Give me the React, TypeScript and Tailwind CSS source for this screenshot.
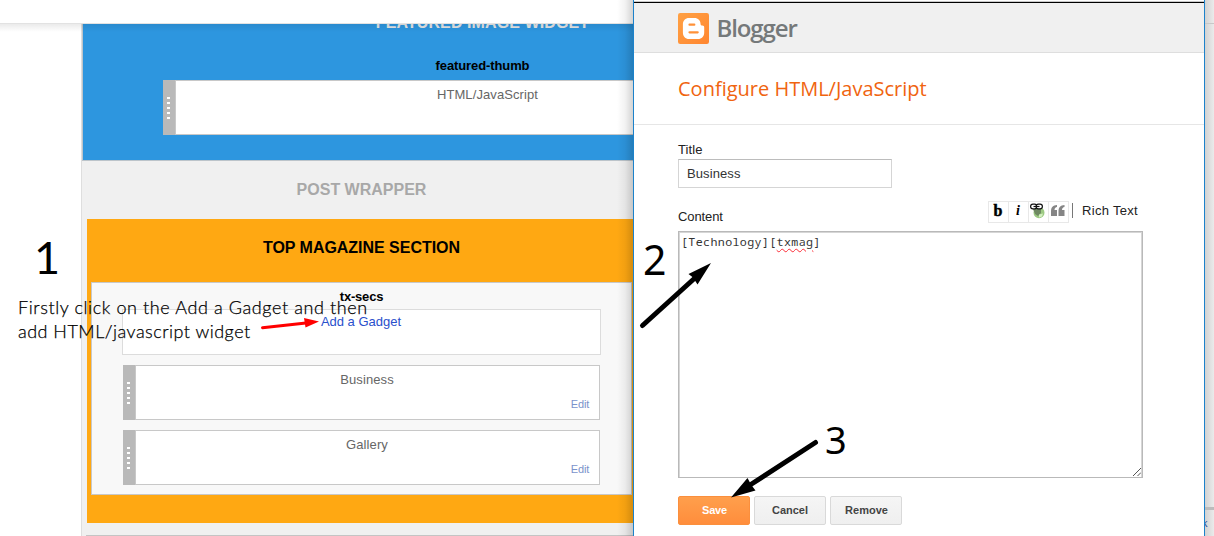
import React from "react";

function Grip() {
  return (
    <div className="flex w-[13px] shrink-0 flex-col gap-[3px] border-r border-[#c8c8c8] bg-[#b9b9b9] pt-[17px] pl-1">
      {[0, 1, 2, 3, 4].map((i) => (
        <span key={i} className="h-[2px] w-[3px] bg-white" />
      ))}
    </div>
  );
}

function Gadget({ name }: { name: string }) {
  return (
    <div className="mt-[10px] ml-[31px] flex h-[55px] w-[477px]">
      <Grip />
      <div className="flex flex-1 flex-col border-y border-r border-[#c8c8c8] bg-white">
        <div className="mt-[5px] h-[18px] pr-[1px] text-center text-[13px] leading-[18px] tracking-[0.1px] text-[#666]">{name}</div>
        <div className="mt-[8px] pr-[10px] text-right text-[11px] leading-[14px] tracking-[-0.2px] text-[#7b93cb]">Edit</div>
      </div>
    </div>
  );
}

function LayoutPage() {
  return (
    <div className="relative flex h-[536px] w-[633px] shrink-0 flex-col overflow-hidden">
      <div className="h-[24px] shrink-0 border-b border-[#e2e2e2] bg-white" />
      <div className="ml-[81px] flex flex-1 flex-col border-l border-[#dedede] bg-[#f0f0f0]">
        <div className="h-[137px] w-[800px] shrink-0 overflow-hidden border-b border-l border-[#bcc4ca] bg-[#2d96df]">
          <div className="-mt-[12px] h-[22px] text-center text-[16px] leading-[22px] font-bold tracking-[0.1px] text-[#e4e4e4]">
            FEATURED IMAGE WIDGET
          </div>
          <div className="mt-[23px] h-[18px] text-center text-[13px] leading-[18px] font-bold tracking-[-0.1px] text-black">
            featured-thumb
          </div>
          <div className="mt-[5px] ml-[80px] flex h-[55px] w-[638px]">
            <Grip />
            <div className="flex-1 border-y border-[#c8c8c8] bg-white pt-[5px] pr-[8px] text-center text-[13px] leading-[18px] tracking-[0.1px] text-[#666]">
              <span className="pl-[6px]">HTML/JavaScript</span>
            </div>
          </div>
        </div>
        <div className="h-[58px] shrink-0 pt-[18px] text-center text-[16px] leading-[22px] font-bold text-[#a8a8a8]">
          <span className="pl-[8px]">POST WRAPPER</span>
        </div>
        <div className="ml-[5px] h-[304px] shrink-0 bg-[#ffa812] pl-1">
          <div className="h-[63px] pt-[18px] pr-[1px] text-center text-[16px] leading-[22px] font-bold tracking-[-0.03px] text-black">
            TOP MAGAZINE SECTION
          </div>
          <div className="h-[213px] w-[541px] border border-[#c8c8c8] bg-[#f8f8f8]">
            <div className="mt-[5px] h-[18px] text-center text-[13px] leading-[18px] font-bold tracking-[-0.2px] text-black">tx-secs</div>
            <div className="mt-[3px] ml-[30px] h-[46px] w-[479px] border border-[#dcdcdc] bg-white pt-[3px] pr-[1px] text-center text-[13px] leading-[18px] text-[#2a50cc]">
              Add a Gadget
            </div>
            <Gadget name="Business" />
            <Gadget name="Gallery" />
          </div>
        </div>
        <div className="mt-[12px] ml-[4px] h-px shrink-0 bg-[#c4c4c4]" />
      </div>
      <div className="absolute inset-x-0 top-[24px] h-[8px] bg-gradient-to-b from-black/8 to-transparent" />
      <div className="absolute inset-y-0 right-0 w-[16px] bg-gradient-to-l from-black/17 via-black/5 to-transparent" />
    </div>
  );
}

function BloggerMark() {
  return (
    <svg width="31" height="31" viewBox="0 0 31 31" className="shrink-0">
      <defs>
        <linearGradient id="mark" x1="0" y1="0" x2="1" y2="1">
          <stop offset="0" stopColor="#ffa144" />
          <stop offset="1" stopColor="#ff8630" />
        </linearGradient>
      </defs>
      <rect width="31" height="31" rx="2.2" fill="url(#mark)" />
      <path
        fill="#fff"
        d="M11 5h5.500c3.600 0 6 2.500 6 5.500 0 1.500.6 2 1.700 2.100 1.500.1 2 .5 2 1.900v5.200c0 3.600-2.500 6.300-6.200 6.300h-9c-3.600 0-6.100-2.700-6.100-6.300v-8.400C4.900 7.700 7.400 5 11 5z"
      />
      <path d="M11.500 11.700h4.800M11.500 19.300h8.200" stroke="#ff9138" strokeWidth="2.200" strokeLinecap="round" />
    </svg>
  );
}

function LinkIcon() {
  return (
    <svg width="16" height="16" viewBox="0 0 16 16" className="shrink-0">
      <circle cx="9" cy="9.700" r="5.500" fill="#9cc982" />
      <path d="M3 6h8v4l-3 3-3-2z" fill="#6f8a63" />
      <path d="M9 11.500l4-1-1 3-3 1z" fill="#d3f0c0" />
      <rect x="0.600" y="1.200" width="6.300" height="4.600" rx="2.300" fill="#fff" stroke="#111" strokeWidth="1.200" />
      <rect x="6.100" y="1.200" width="6.300" height="4.600" rx="2.300" fill="#fff" stroke="#111" strokeWidth="1.200" />
      <path d="M3.500 3.500h6" stroke="#111" strokeWidth="1.200" />
    </svg>
  );
}

function QuoteIcon() {
  return (
    <svg width="14" height="12" viewBox="0 0 14 12" fill="#858585">
      <path d="M6 0v2C4.500 2.300 3.600 3.200 3.500 5H6v6H0V6C0 2.300 2 .3 6 0zM13.500 0v2C12 2.300 11.100 3.200 11 5h2.500v6h-6V6c0-3.700 2-5.700 6-6z" />
    </svg>
  );
}

const tool = "flex h-[22px] w-[20px] items-center justify-center border-y border-r border-[#e8e8e8] pr-px pb-[2px]";

function ConfigurePopup() {
  return (
    <div className="flex h-[536px] w-[572px] shrink-0 flex-col overflow-hidden border-x border-[#1c82cb] bg-white">
      <div className="h-[3px] shrink-0 border-b border-black bg-white pt-px">
        <div className="h-px bg-[#c9c9c9]" />
      </div>
      <div className="flex h-[50px] shrink-0 border-b border-[#dedede] bg-[#f0f0f0] pt-[10px] pl-[44px]">
        <BloggerMark />
        <div className="ml-[7.500px] h-[31px] font-['Open_Sans'] text-[24px] leading-[30px] font-semibold tracking-[-1.1px] text-[#75797a]">
          Blogger
        </div>
      </div>
      <div className="h-[72px] shrink-0 border-b border-[#e6e6e6] pt-[22px] pl-[44px] font-['Open_Sans'] text-[20px] leading-[28px] text-[#f0640f]">
        Configure HTML/JavaScript
      </div>
      <div className="flex flex-col pl-[44px] text-[13px] text-[#222]">
        <div className="mt-[16px] h-[18px] leading-[18px] tracking-[0.1px]">Title</div>
        <div className="h-[29px] w-[214px] border border-[#d5d5d5] border-t-[#bcbcbc] pl-2 leading-[27px] tracking-[0.1px] text-[#333]">
          Business
        </div>
        <div className="mt-[12px] flex h-[31px] w-[465px] justify-between">
          <div className="pt-[8px] leading-[18px] tracking-[-0.1px]">Content</div>
          <div className="flex items-start pr-[5px]">
            <div className="mt-px flex border-l border-[#e8e8e8]">
              <div className={tool}>
                <span className="font-['Liberation_Serif'] text-[16px] leading-[16px] font-black text-black [-webkit-text-stroke:0.5px_black]">b</span>
              </div>
              <div className={tool}>
                <span className="font-['Liberation_Serif'] text-[14px] leading-[16px] font-bold text-black italic">i</span>
              </div>
              <div className={tool}><LinkIcon /></div>
              <div className={tool}><QuoteIcon /></div>
            </div>
            <div className="mt-[3px] ml-[3px] h-[15px] w-px bg-[#777]" />
            <div className="ml-[9px] pt-[2px] leading-[18px] tracking-[0.3px]">Rich Text</div>
          </div>
        </div>
        <div className="relative h-[247px] w-[465px] border border-[#b9b9b9] pt-[2px] pl-[2px] font-['Noto_Sans_Mono','DejaVu_Sans_Mono',monospace] text-[11.650px] leading-[15px] tracking-[0.370px] text-[#333] shadow-[inset_1px_1px_0_#d6d6d6,inset_-1px_0_0_#d6d6d6]">
          [Technology][<span className="underline decoration-red-500 decoration-wavy decoration-[1px] underline-offset-[2px]">txmag</span>]
          <svg width="8" height="8" viewBox="0 0 8 8" className="absolute right-px bottom-px" stroke="#555" strokeWidth="1">
            <path d="M0 8L8 0M4.500 8L8 4.500" />
          </svg>
        </div>
        <div className="mt-[18px] flex gap-1 text-[11px] leading-[27px] font-bold text-[#444]">
          <div className="h-[29px] w-[72px] rounded-[2px] border border-[#fb8f3d] bg-gradient-to-b from-[#ff9f4c] to-[#ff8d3c] pl-px text-center tracking-[-0.2px] text-white">Save</div>
          <div className="h-[29px] w-[72px] rounded-[2px] border border-[#d9d9d9] bg-gradient-to-b from-[#f5f5f5] to-[#efefef] text-center">Cancel</div>
          <div className="h-[29px] w-[72px] rounded-[2px] border border-[#d9d9d9] bg-gradient-to-b from-[#f5f5f5] to-[#efefef] pl-px text-center">Remove</div>
        </div>
      </div>
    </div>
  );
}

function PageEdge() {
  return (
    <div className="flex h-[536px] w-[9px] shrink-0 flex-col overflow-hidden bg-gradient-to-r from-[#d2d2d2] to-[#ebebeb]">
      <div className="h-[24px] shrink-0 border-b border-[#c8c8c8]" />
      <div className="mt-[483px] h-[3px] shrink-0 bg-[#bcbcbc]" />
      <div className="mt-[5px] -ml-[3px] text-[11px] leading-[16px] text-[#2c4d9c]">k</div>
    </div>
  );
}

function Annotations() {
  return (
    <div className="pointer-events-none absolute inset-0 font-['Lato'] text-black">
      <div className="absolute top-[229px] left-[34px] text-[45px] leading-[56px]">1</div>
      <div className="absolute top-[231px] left-[643px] font-['Noto_Sans'] text-[41px] leading-[56px]">2</div>
      <div className="absolute top-[413px] left-[825px] font-['Noto_Sans'] text-[38px] leading-[52px]">3</div>
      <div className="absolute top-[295px] left-[18px] text-[18px] leading-[24px] font-light whitespace-nowrap [-webkit-text-stroke:0.25px_black]">
        <div className="tracking-[0.6px]">Firstly click on the Add a Gadget and then</div>
        <div className="tracking-[0.480px]">add HTML/javascript widget</div>
      </div>
      <svg width="1214" height="536" viewBox="0 0 1214 536" className="absolute inset-0">
        <path d="M262.500 327.700L306 323" stroke="#f00" strokeWidth="3" strokeLinecap="round" />
        <path d="M319 321.500L304 318L305.500 327.500z" fill="#f00" />
        <path d="M642.500 325.500L696 277" stroke="#000" strokeWidth="5" strokeLinecap="round" />
        <path d="M711 263L688.500 274L693 277.500L697.500 284.500z" fill="#000" />
        <path d="M815.500 442.500L750 485" stroke="#000" strokeWidth="5" strokeLinecap="round" />
        <path d="M731 497.500L747.500 478L751 484.500L755.500 490.500z" fill="#000" />
      </svg>
    </div>
  );
}

export default function App() {
  return (
    <div className="relative flex h-[536px] w-[1214px] overflow-hidden bg-white font-['Liberation_Sans',Arial,sans-serif]">
      <LayoutPage />
      <ConfigurePopup />
      <PageEdge />
      <Annotations />
    </div>
  );
}
